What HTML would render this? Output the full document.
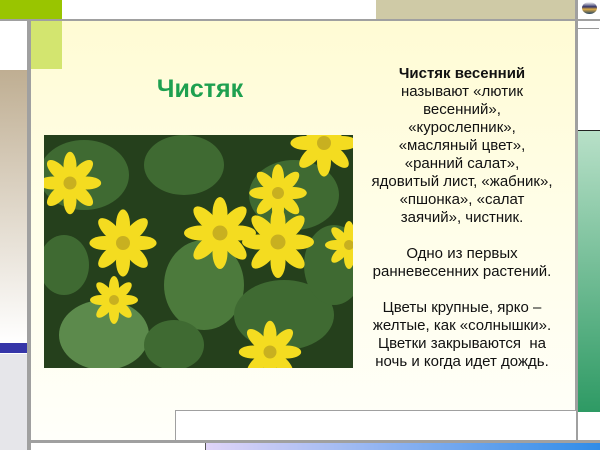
<!DOCTYPE html>
<html><head><meta charset="utf-8"><style>
body{margin:0;width:600px;height:450px;position:relative;overflow:hidden;background:#fff;font-family:"Liberation Sans",sans-serif}
div{position:absolute}
</style></head><body>
<div style="left:0;top:0;width:62px;height:19px;background:#99c500"></div>
<div style="left:376px;top:0;width:199px;height:19px;background:#cfcaa6"></div>
<div style="left:376px;top:19px;width:223px;height:10px;border-left:1px solid #999;border-bottom:1px solid #999;box-sizing:border-box"></div>
<div style="left:31px;top:21px;width:544px;height:419px;background:linear-gradient(180deg,#fffbd4 0%,#fffee9 50%,#fffffa 100%)"></div>
<div style="left:31px;top:21px;width:31px;height:48px;background:#d3e56f"></div>
<div style="left:0;top:70px;width:27px;height:273px;background:linear-gradient(180deg,#bfae92,#ffffff)"></div>
<div style="left:0;top:343px;width:27px;height:10px;background:#3535a8"></div>
<div style="left:0;top:354px;width:27px;height:96px;background:#e6e6ea"></div>
<div style="left:0;top:19px;width:600px;height:2px;background:#a0a0a0"></div>
<div style="left:27px;top:19px;width:4px;height:431px;background:#a0a0a0"></div>
<div style="left:575px;top:0;width:3px;height:440px;background:#a0a0a0"></div>
<div style="left:578px;top:130px;width:22px;height:281px;background:linear-gradient(180deg,#b8e0c8,#2e9a64);border-top:1px solid #222"></div>
<div style="left:582px;top:2px;width:15px;height:12px;border-radius:50%;background:linear-gradient(180deg,#fff 0%,#336 40%,#da4 60%,#246 100%)"></div>
<div style="left:175px;top:410px;width:401px;height:32px;border:1px solid #a0a0a0;border-right:none;box-sizing:border-box;background:#fff"></div>
<div style="left:31px;top:440px;width:569px;height:3px;background:#a0a0a0"></div>
<div style="left:205px;top:443px;width:395px;height:7px;background:linear-gradient(90deg,#e0d4f8,#2f8ce8);border-left:1px solid #555"></div>
<div style="left:100px;top:72px;width:200px;text-align:center;color:#1ea050;font-weight:bold;font-size:25px;line-height:34px">Чистяк</div>
<div style="left:342px;top:65px;width:240px;text-align:center;font-size:15px;line-height:18px;color:#111">
<b>Чистяк весенний</b><br>называют «лютик<br>весенний»,<br>«курослепник»,<br>«масляный цвет»,<br>«ранний салат»,<br>ядовитый лист, «жабник»,<br>«пшонка», «салат<br>заячий», чистник.<br><br>Одно из первых<br>ранневесенних растений.<br><br>Цветы крупные, ярко –<br>желтые, как «солнышки».<br>Цветки закрываются&nbsp; на<br>ночь и когда идет дождь.</div>
<svg style="position:absolute;left:44px;top:135px" width="309" height="233" viewBox="0 0 309 233">
<defs>
<g id="f"><g fill="#f4dc20">
<ellipse cx="0" cy="-13" rx="5" ry="11"/><ellipse cx="0" cy="-13" rx="5" ry="11" transform="rotate(45)"/><ellipse cx="0" cy="-13" rx="5" ry="11" transform="rotate(90)"/><ellipse cx="0" cy="-13" rx="5" ry="11" transform="rotate(135)"/><ellipse cx="0" cy="-13" rx="5" ry="11" transform="rotate(180)"/><ellipse cx="0" cy="-13" rx="5" ry="11" transform="rotate(225)"/><ellipse cx="0" cy="-13" rx="5" ry="11" transform="rotate(270)"/><ellipse cx="0" cy="-13" rx="5" ry="11" transform="rotate(315)"/></g><circle r="5" fill="#c8b020"/></g>
</defs>
<rect width="309" height="233" fill="#25401c"/>
<g fill="#3f6a32">
<ellipse cx="40" cy="40" rx="45" ry="35"/><ellipse cx="140" cy="30" rx="40" ry="30"/><ellipse cx="250" cy="60" rx="45" ry="35"/>
<ellipse cx="160" cy="150" rx="40" ry="45" fill="#4c7a3c"/><ellipse cx="60" cy="200" rx="45" ry="35" fill="#5c8a4c"/><ellipse cx="240" cy="180" rx="50" ry="35"/>
<ellipse cx="20" cy="130" rx="25" ry="30"/><ellipse cx="290" cy="130" rx="30" ry="40"/><ellipse cx="130" cy="210" rx="30" ry="25"/>
</g>
<use href="#f" transform="translate(26,48) scale(1.3)"/>
<use href="#f" transform="translate(79,108) scale(1.4)"/>
<use href="#f" transform="translate(176,98) scale(1.5)"/>
<use href="#f" transform="translate(234,58) scale(1.2)"/>
<use href="#f" transform="translate(234,107) scale(1.5)"/>
<use href="#f" transform="translate(70,165) scale(1)"/>
<use href="#f" transform="translate(226,217) scale(1.3)"/>
<use href="#f" transform="translate(280,8) scale(1.4)"/>
<use href="#f" transform="translate(305,110) scale(1)"/>
</svg>
</body></html>
